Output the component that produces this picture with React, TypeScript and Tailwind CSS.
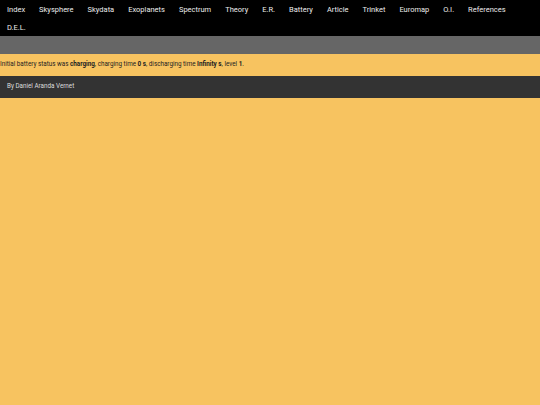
import React from "react";

const items = ["Index","Skysphere","Skydata","Exoplanets","Spectrum","Theory","E.R.","Battery","Article","Trinket","Euromap","O.I.","References","D.E.L."];

export default function App() {
  return (
    <div className="min-h-[405px] bg-[#f7c360]" style={{ fontFamily: "Roboto, sans-serif" }}>
      <nav className="bg-black flex flex-wrap">
        {items.map((t) => (
          <a key={t} className="px-[7px] h-[18px] pt-[1px] flex items-center text-[7.5px] text-[#ececec]">{t}</a>
        ))}
      </nav>
      <div className="h-[18px] bg-[#666666]" />
      <div className="h-[22px] flex items-center text-[6.3px] text-[#222]">
        <span>Initial battery status was <b>charging</b>, charging time <b>0 s</b>, discharging time <b>Infinity s</b>, level <b>1</b>.</span>
      </div>
      <div className="h-[22px] bg-[#333333] flex items-center px-[7px] text-[6.3px] text-[#ddd]">By Daniel Aranda Vernet</div>
    </div>
  );
}
